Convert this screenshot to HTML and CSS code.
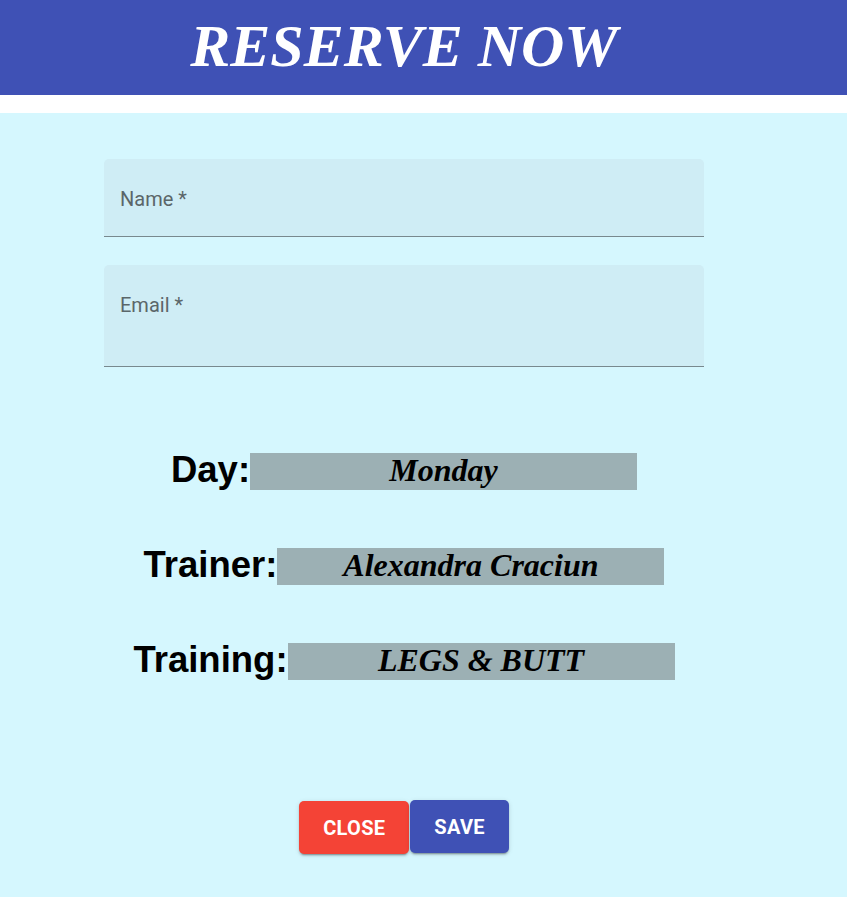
FILE: index.html
```html
<!DOCTYPE html>
<html lang="en">
<head>
<meta charset="utf-8">
<title>Reserve Now</title>
<link rel="stylesheet" href="styles.css">
</head>
<body>
<header class="topbar">
  <h1 class="title">RESERVE NOW</h1>
</header>
<main class="page">
  <form class="form">
    <div class="field field-name"><label class="field-label">Name *</label></div>
    <div class="field field-email"><label class="field-label">Email *</label></div>
  </form>
  <section class="details">
    <div class="row"><span class="row-label">Day:</span><span class="row-value">Monday</span></div>
    <div class="row"><span class="row-label">Trainer:</span><span class="row-value">Alexandra Craciun</span></div>
    <div class="row"><span class="row-label">Training:</span><span class="row-value">LEGS &amp; BUTT</span></div>
  </section>
  <div class="actions">
    <button class="btn btn-close" type="button">Close</button>
    <button class="btn btn-save" type="button">Save</button>
  </div>
</main>
</body>
</html>
```
FILE: styles.css
```css
html, body {
  margin: 0;
  padding: 0;
}
body {
  background: #d5f7fe;
  min-height: 897px;
}
.topbar {
  background: #3f51b5;
  border-bottom: 18px solid #ffffff;
  height: 95px;
}
.title {
  width: 808px;
  margin: 0;
  padding-top: 13px;
  line-height: 66px;
  text-align: center;
  font-family: "Liberation Serif", "Times New Roman", serif;
  font-style: italic;
  font-weight: 700;
  font-size: 60px;
  color: #ffffff;
}
.page {
  width: 808px;
  display: flex;
  flex-direction: column;
  align-items: center;
  padding-top: 46px;
}
.form {
  width: 600px;
  display: flex;
  flex-direction: column;
  gap: 28px;
}
.field {
  background: #cfedf5;
  border-radius: 5px 5px 0 0;
  border-bottom: 1px solid rgba(0, 0, 0, 0.42);
  box-sizing: border-box;
  padding: 28px 16px 0;
}
.field-name { height: 78px; }
.field-email { height: 102px; }
.field-label {
  display: block;
  font-family: Roboto, "Liberation Sans", sans-serif;
  font-size: 20px;
  line-height: 24px;
  color: #5b6669;
}
.details {
  margin-top: 81px;
  display: flex;
  flex-direction: column;
  gap: 53px;
  align-items: center;
}
.row {
  display: flex;
  align-items: flex-end;
  height: 42px;
}
.row-label {
  font-family: "Liberation Sans", Arial, sans-serif;
  font-weight: 700;
  font-size: 36.5px;
  line-height: 40px;
  color: #000000;
}
.row-value {
  width: 387px;
  height: 37px;
  box-sizing: border-box;
  padding-bottom: 3px;
  background: #9cb0b4;
  text-align: center;
  font-family: "Liberation Serif", "Times New Roman", serif;
  font-style: italic;
  font-weight: 700;
  font-size: 32px;
  line-height: 34px;
  color: #000000;
}
.actions {
  margin-top: 120px;
  display: flex;
  align-items: flex-start;
  gap: 1px;
}
.btn {
  height: 53px;
  border: none;
  border-radius: 5px;
  padding: 0 24px;
  font-family: Roboto, "Liberation Sans", sans-serif;
  font-weight: 700;
  font-size: 20px;
  letter-spacing: 0.3px;
  text-transform: uppercase;
  color: #ffffff;
  box-shadow: 0 3px 1px -2px rgba(0,0,0,0.2), 0 2px 2px 0 rgba(0,0,0,0.14), 0 1px 5px 0 rgba(0,0,0,0.12);
  cursor: pointer;
}
.btn-close {
  background: #f44336;
  margin-top: 1px;
}
.btn-save {
  background: #3f51b5;
}
```
